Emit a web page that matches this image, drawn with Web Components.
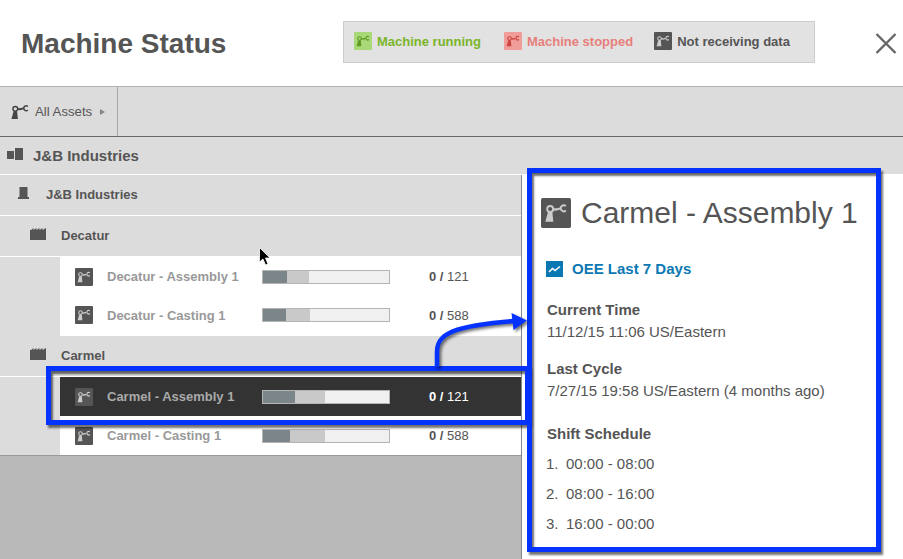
<!DOCTYPE html>
<html>
<head>
<meta charset="utf-8">
<title>Machine Status</title>
<style>
html, body { margin: 0; padding: 0; background: #fff; }
body { width: 903px; height: 559px; overflow: hidden; font-family: "Liberation Sans", Arial, sans-serif; color: #555; }
</style>
</head>
<body>
<status-app></status-app>

<script>
class MachineIcon extends HTMLElement {
    connectedCallback() {
        const size = this.getAttribute('size') || 18;
        const bg = this.getAttribute('bg') || 'transparent';
        const fg = this.getAttribute('fg') || '#ccc';
        const radius = this.getAttribute('bg') ? 1 : 0;
        this.attachShadow({ mode: 'open' }).innerHTML = `
        <style>:host { display: block; width: ${size}px; height: ${size}px; flex: none; } svg { display: block; }</style>
        <svg width="${size}" height="${size}" viewBox="0 0 18 18">
            <rect width="18" height="18" rx="${radius}" fill="${bg}"/>
            <path d="M2.6 14.2 L4.2 8.4 L6.8 8.4 L7.4 14.2 Z" fill="${fg}"/>
            <circle cx="5.5" cy="6.6" r="1.8" fill="none" stroke="${fg}" stroke-width="1.1"/>
            <path d="M7.2 6.7 Q9 7.3 11.4 6.3" stroke="${fg}" stroke-width="1.4" fill="none"/>
            <path d="M14.9 4.9 A1.8 1.8 0 1 0 14.9 7.5" stroke="${fg}" stroke-width="1.1" fill="none"/>
        </svg>`;
    }
}

class StatusBar extends HTMLElement {
    connectedCallback() {
        const dark = parseFloat(this.getAttribute('dark'));
        const mid = parseFloat(this.getAttribute('mid'));
        this.attachShadow({ mode: 'open' }).innerHTML = `
        <style>
            :host { display: flex; box-sizing: border-box; width: 128px; height: 14px; border: 1px solid #b4b4b4; background: #f0f0f0; flex: none; }
            .dark { width: ${dark}px; background: #7b858a; }
            .mid { width: ${mid}px; background: #c9c9c9; }
        </style>
        <div class="dark"></div><div class="mid"></div>`;
    }
}

class LegendItem extends HTMLElement {
    connectedCallback() {
        const color = this.getAttribute('color');
        this.attachShadow({ mode: 'open' }).innerHTML = `
        <style>
            :host { display: flex; align-items: center; gap: 5px; font-size: 13px; font-weight: bold; color: ${color}; }
        </style>
        <machine-icon bg="${this.getAttribute('bg')}" fg="${this.getAttribute('fg')}"></machine-icon>
        <slot></slot>`;
    }
}

class StatusHeader extends HTMLElement {
    constructor() {
        super();
        this.attachShadow({ mode: 'open' }).innerHTML = `
        <style>
            :host { display: flex; align-items: flex-start; height: 86px; box-sizing: border-box; background: #fff; }
            h1 { margin: 27px 0 0 21px; width: 322px; font-size: 28px; line-height: 34px; font-weight: bold; color: #555; }
            .legend { display: flex; align-items: center; box-sizing: border-box; width: 472px; height: 42px; margin-top: 21px; padding: 0 0 2px 10px; gap: 23px; background: #e2e2e2; border: 1px solid #ccc; }
            .close { margin: 33px 0 0 60px; }
            svg { display: block; }
        </style>
        <h1>Machine Status</h1>
        <div class="legend">
            <legend-item color="#7ab52a" bg="#a9d878" fg="#5c9a22">Machine running</legend-item>
            <legend-item color="#e77f7b" bg="#f09c98" fg="#c9443e">Machine stopped</legend-item>
            <legend-item color="#555" bg="#555" fg="#ccc" style="margin-left:-2px">Not receiving data</legend-item>
        </div>
        <svg class="close" width="22" height="21" viewBox="0 0 22 21"><path d="M1.5 1 L20.5 20 M20.5 1 L1.5 20" stroke="#666" stroke-width="2.4" fill="none"/></svg>`;
    }
}

class AssetNav extends HTMLElement {
    constructor() {
        super();
        this.attachShadow({ mode: 'open' }).innerHTML = `
        <style>
            :host { display: flex; height: 51px; box-sizing: border-box; background: #dcdcdc; border-top: 1px solid #b2b2b2; border-bottom: 1px solid #666; }
            .cell { display: flex; align-items: center; width: 118px; box-sizing: border-box; padding-left: 8px; gap: 3px; border-right: 1px solid #aaa; font-size: 13.2px; color: #555; }
            .tri { width: 0; height: 0; margin-left: 5px; border-left: 5px solid #888; border-top: 3.5px solid transparent; border-bottom: 3.5px solid transparent; }
        </style>
        <div class="cell">
            <machine-icon size="24" fg="#444"></machine-icon>
            <span>All Assets</span>
            <span class="tri"></span>
        </div>`;
    }
}

class GroupRow extends HTMLElement {
    connectedCallback() {
        const kind = this.getAttribute('kind');
        const indent = this.getAttribute('indent');
        const gap = this.getAttribute('gap');
        const lift = this.getAttribute('lift') || 2;
        const icons = {
            company: '<svg width="17" height="14" viewBox="0 0 17 14"><rect x="0" y="3" width="7" height="8" fill="#555"/><rect x="8" y="0" width="8" height="12" fill="#555"/></svg>',
            site: '<svg width="11" height="12" viewBox="0 0 11 12"><rect x="1.5" y="0" width="8" height="10" fill="#555"/><rect x="0" y="10" width="11" height="2" fill="#555"/></svg>',
            factory: '<svg width="16" height="12" viewBox="0 0 16 12"><path d="M0 12 V2 L1 2 L3.5 0 V2 L6.5 0 V2 L9.5 0 V2 L12.5 0 V2 L16 0 V12 Z" fill="#555"/></svg>'
        };
        this.attachShadow({ mode: 'open' }).innerHTML = `
        <style>
            :host { display: flex; align-items: center; box-sizing: border-box; height: ${this.getAttribute('height') || 41}px; padding: 0 0 ${lift}px ${indent}px; gap: ${gap}px; background: #dcdcdc; border-bottom: 1px solid #fff; font-weight: bold; font-size: ${this.getAttribute('font') || 13}px; color: #555; }
            svg { display: block; transform: translateY(-1px); }
        </style>
        ${icons[kind]}<slot></slot>`;
    }
}

class AssetRow extends HTMLElement {
    connectedCallback() {
        const selected = this.hasAttribute('selected');
        this.attachShadow({ mode: 'open' }).innerHTML = `
        <style>
            :host { display: block; background: #dcdcdc; padding-left: 60px; }
            .row { display: flex; align-items: center; box-sizing: border-box; height: ${this.getAttribute('height') || 39}px; padding: 0 0 ${this.getAttribute('lift') || 0}px 15px; background: ${selected ? '#333' : '#fff'}; }
            .name { width: 155px; margin-left: 14px; font-size: 13px; font-weight: bold; color: ${selected ? '#aaa' : '#999'}; white-space: nowrap; }
            .count { margin-left: 39px; font-size: 13px; color: ${selected ? '#fff' : '#555'}; white-space: nowrap; }
            .count b { font-weight: bold; }
        </style>
        <div class="row">
            <machine-icon bg="#555" fg="#ccc"></machine-icon>
            <span class="name">${this.getAttribute('name')}</span>
            <status-bar dark="${this.getAttribute('dark')}" mid="${this.getAttribute('mid')}"></status-bar>
            <span class="count"><b>0 /</b> ${this.getAttribute('total')}</span>
        </div>`;
    }
}

class AssetTree extends HTMLElement {
    constructor() {
        super();
        this.attachShadow({ mode: 'open' }).innerHTML = `
        <style>
            :host { display: block; width: 521px; flex: none; background: #b9b9b9; }
            .rows { border-bottom: 1px solid #999; }
        </style>
        <div class="rows">
            <group-row kind="site" indent="18" gap="17">J&amp;B Industries</group-row>
            <group-row kind="factory" indent="30" gap="15">Decatur</group-row>
            <asset-row name="Decatur - Assembly 1" dark="24" mid="22" total="121"></asset-row>
            <asset-row name="Decatur - Casting 1" dark="23" mid="24" total="588" height="40" lift="2"></asset-row>
            <group-row kind="factory" indent="30" gap="15">Carmel</group-row>
            <asset-row selected name="Carmel - Assembly 1" dark="32" mid="30" total="121"></asset-row>
            <asset-row name="Carmel - Casting 1" dark="27" mid="35" total="588"></asset-row>
        </div>`;
    }
}

class DetailPanel extends HTMLElement {
    constructor() {
        super();
        this.attachShadow({ mode: 'open' }).innerHTML = `
        <style>
            :host { display: block; flex: 1; box-sizing: border-box; background: #fff; border-left: 1px solid #888; padding: 21px 0 0 25px; font-size: 15px; color: #555; }
            .head { display: flex; align-items: center; gap: 10px; margin-left: -6px; }
            h2 { margin: 0; font-size: 30px; line-height: 34px; font-weight: normal; color: #555; white-space: nowrap; }
            .oee { display: flex; align-items: center; gap: 9px; margin: 30px 0 0 -1px; color: #0b78b4; font-weight: bold; line-height: 17px; }
            .oee svg { display: block; }
            h3 { margin: 0; font-size: 15px; line-height: 17px; font-weight: bold; color: #555; }
            .block { margin-top: 24px; }
            .block + .block { margin-top: 20px; }
            .val { margin-top: 5px; line-height: 17px; }
            ol { list-style: none; margin: 7px 0 0 -1px; padding: 0; }
            li { display: flex; line-height: 30px; }
            li span { width: 20px; }
        </style>
        <div class="head">
            <machine-icon size="30" bg="#555" fg="#ccc"></machine-icon>
            <h2>Carmel - Assembly 1</h2>
        </div>
        <div class="oee">
            <svg width="17" height="16" viewBox="0 0 17 16"><rect width="17" height="16" fill="#0b78b4"/><path d="M3 11 L6.5 7.5 L9 9.5 L14 5.5" stroke="#fff" stroke-width="1.6" fill="none"/></svg>
            <span>OEE Last 7 Days</span>
        </div>
        <div class="block"><h3>Current Time</h3><div class="val">11/12/15 11:06 US/Eastern</div></div>
        <div class="block"><h3>Last Cycle</h3><div class="val">7/27/15 19:58 US/Eastern (4 months ago)</div></div>
        <div class="block" style="margin-top:26px"><h3>Shift Schedule</h3>
            <ol>
                <li><span>1.</span>00:00 - 08:00</li>
                <li><span>2.</span>08:00 - 16:00</li>
                <li><span>3.</span>16:00 - 00:00</li>
            </ol>
        </div>`;
    }
}

class AnnotationLayer extends HTMLElement {
    constructor() {
        super();
        // blue callouts and the mouse pointer sit over the page
        this.attachShadow({ mode: 'open' }).innerHTML = `
        <style>
            :host { display: block; position: absolute; inset: 0; pointer-events: none; }
            .box { position: absolute; box-sizing: border-box; border: 5px solid #0433ff; box-shadow: 2px 3px 2px rgba(0,0,0,.55), inset 2px 3px 2px rgba(0,0,0,.55); }
            .panel { left: 527px; top: 168px; width: 354px; height: 384px; }
            .row { left: 46px; top: 366px; width: 484px; height: 59px; }
            svg { position: absolute; left: 0; top: 0; }
            .arrow { filter: drop-shadow(2px 2px 1.5px rgba(0,0,0,.55)); }
        </style>
        <div class="box row"></div>
        <div class="box panel"></div>
        <svg class="arrow" width="903" height="559">
            <path d="M437 367 V352 C437 334 452 326 514 321" stroke="#0433ff" stroke-width="4.5" fill="none"/>
            <path d="M527 320.5 L511.5 313 L513.5 330 Z" fill="#0433ff"/>
        </svg>
        <svg width="903" height="559">
            <path d="M259.5 247.5 V262 L263 259 L265.5 265 L268 264 L265.5 258 L270 258 Z" fill="#000" stroke="#fff" stroke-width="0.8"/>
        </svg>`;
    }
}

class StatusApp extends HTMLElement {
    constructor() {
        super();
        this.attachShadow({ mode: 'open' }).innerHTML = `
        <style>
            :host { display: flex; flex-direction: column; position: relative; width: 903px; height: 559px; overflow: hidden; }
            .main { display: flex; flex: 1; min-height: 0; }
        </style>
        <status-header></status-header>
        <asset-nav></asset-nav>
        <group-row kind="company" indent="7" gap="9" height="38" font="15" lift="0">J&amp;B Industries</group-row>
        <div class="main">
            <asset-tree></asset-tree>
            <detail-panel></detail-panel>
        </div>
        <annotation-layer></annotation-layer>`;
    }
}

customElements.define('machine-icon', MachineIcon);
customElements.define('status-bar', StatusBar);
customElements.define('legend-item', LegendItem);
customElements.define('status-header', StatusHeader);
customElements.define('asset-nav', AssetNav);
customElements.define('group-row', GroupRow);
customElements.define('asset-row', AssetRow);
customElements.define('asset-tree', AssetTree);
customElements.define('detail-panel', DetailPanel);
customElements.define('annotation-layer', AnnotationLayer);
customElements.define('status-app', StatusApp);
</script>
</body>
</html>
